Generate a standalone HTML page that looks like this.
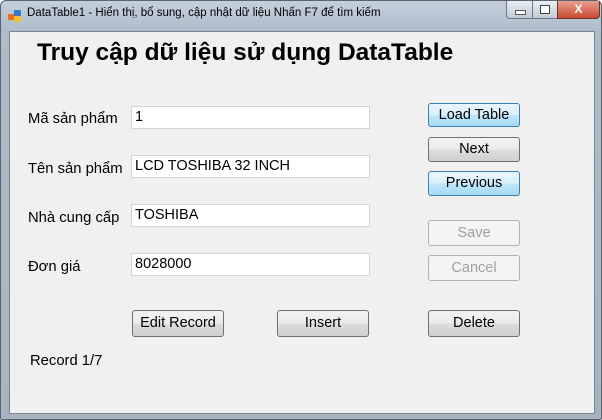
<!DOCTYPE html><html><head><meta charset="utf-8"><style>
body{margin:0;width:602px;height:420px;overflow:hidden;background:#fff;font-family:"Liberation Sans",sans-serif}
.win{position:absolute;left:0;top:0;width:600px;height:418px;border:1px solid #5a6470;border-radius:6px 6px 2px 2px;background:linear-gradient(180deg,#c4d0dc 0,#aebccb 30px,#a6b3c0 100%)}
.client{position:absolute;left:8px;top:30px;width:584px;height:381px;background:#f0f0f0;border:1px solid #7b8690}
.t{position:absolute;font-size:14.8px;color:#000;white-space:nowrap}
.tb{position:absolute;left:121px;width:239px;height:23px;background:#fff;border:1px solid #d0d3d8;box-sizing:border-box;font-size:14.5px;padding:2px 0 0 3px}
.b{position:absolute;width:92px;box-sizing:border-box;border:1px solid #707070;border-radius:3px;background:linear-gradient(#f2f2f2 0,#ebebeb 50%,#dddddd 51%,#cfcfcf 100%);font-size:14.5px;text-align:center;color:#000}
.blue{border-color:#3c7fb1;background:linear-gradient(#eaf6fd 0,#d9f0fc 50%,#bee6fd 51%,#a7d9f5 100%)}
.dis{border-color:#adb2b5;background:#f4f4f4;color:#a0a0a0}
</style></head><body>
<div class="win">
<svg style="position:absolute;left:7px;top:8px" width="14" height="14"><rect x="0" y="5" width="6" height="6" fill="#e87020"/><rect x="6" y="1" width="7" height="6" fill="#3a78c8"/><rect x="6" y="7" width="7" height="6" fill="#f0c030"/></svg>
<div class="t" style="left:26px;top:6px;font-size:11.5px">DataTable1 - Hiển thị, bổ sung, cập nhật dữ liệu Nhấn F7 để tìm kiếm</div>
<div style="position:absolute;left:505px;top:0;width:25px;height:17px;border:1px solid #6d7680;border-top:none;border-radius:0 0 0 4px;background:linear-gradient(#e8eef4,#c2ccd6)"><div style="position:absolute;left:8px;top:9px;width:9px;height:3px;background:#fff;border:1px solid #555"></div></div>
<div style="position:absolute;left:531px;top:0;width:24px;height:17px;border:1px solid #6d7680;border-top:none;background:linear-gradient(#e8eef4,#c2ccd6)"><div style="position:absolute;left:7px;top:4px;width:8px;height:7px;border:1px solid #444;background:#fff"></div></div>
<div style="position:absolute;left:556px;top:0;width:41px;height:17px;border:1px solid #6d3030;border-top:none;border-radius:0 0 4px 0;background:linear-gradient(#e8a090,#c84a30);color:#fff;font-weight:bold;font-size:12px;text-align:center;line-height:16px">X</div>
<div class="client">
<div class="t" style="left:27px;top:7px;font-size:24.5px;font-weight:bold">Truy cập dữ liệu sử dụng DataTable</div>
<div class="t" style="left:18px;top:79px">Mã sản phẩm</div>
<div class="t" style="left:18px;top:129px">Tên sản phẩm</div>
<div class="t" style="left:18px;top:178px">Nhà cung cấp</div>
<div class="t" style="left:18px;top:227px">Đơn giá</div>
<div class="tb" style="top:74px">1</div>
<div class="tb" style="top:123px">LCD TOSHIBA 32 INCH</div>
<div class="tb" style="top:172px">TOSHIBA</div>
<div class="tb" style="top:221px">8028000</div>
<div class="b blue" style="left:418px;top:71px;height:24px;line-height:22px">Load Table</div>
<div class="b" style="left:418px;top:105px;height:25px;line-height:23px">Next</div>
<div class="b blue" style="left:418px;top:139px;height:25px;line-height:23px">Previous</div>
<div class="b dis" style="left:418px;top:188px;height:26px;line-height:24px">Save</div>
<div class="b dis" style="left:418px;top:223px;height:26px;line-height:24px">Cancel</div>
<div class="b" style="left:418px;top:278px;height:27px;line-height:25px">Delete</div>
<div class="b" style="left:122px;top:278px;height:27px;line-height:25px">Edit Record</div>
<div class="b" style="left:267px;top:278px;height:27px;line-height:25px">Insert</div>
<div class="t" style="left:20px;top:321px">Record 1/7</div>
</div></div>
</body></html>
